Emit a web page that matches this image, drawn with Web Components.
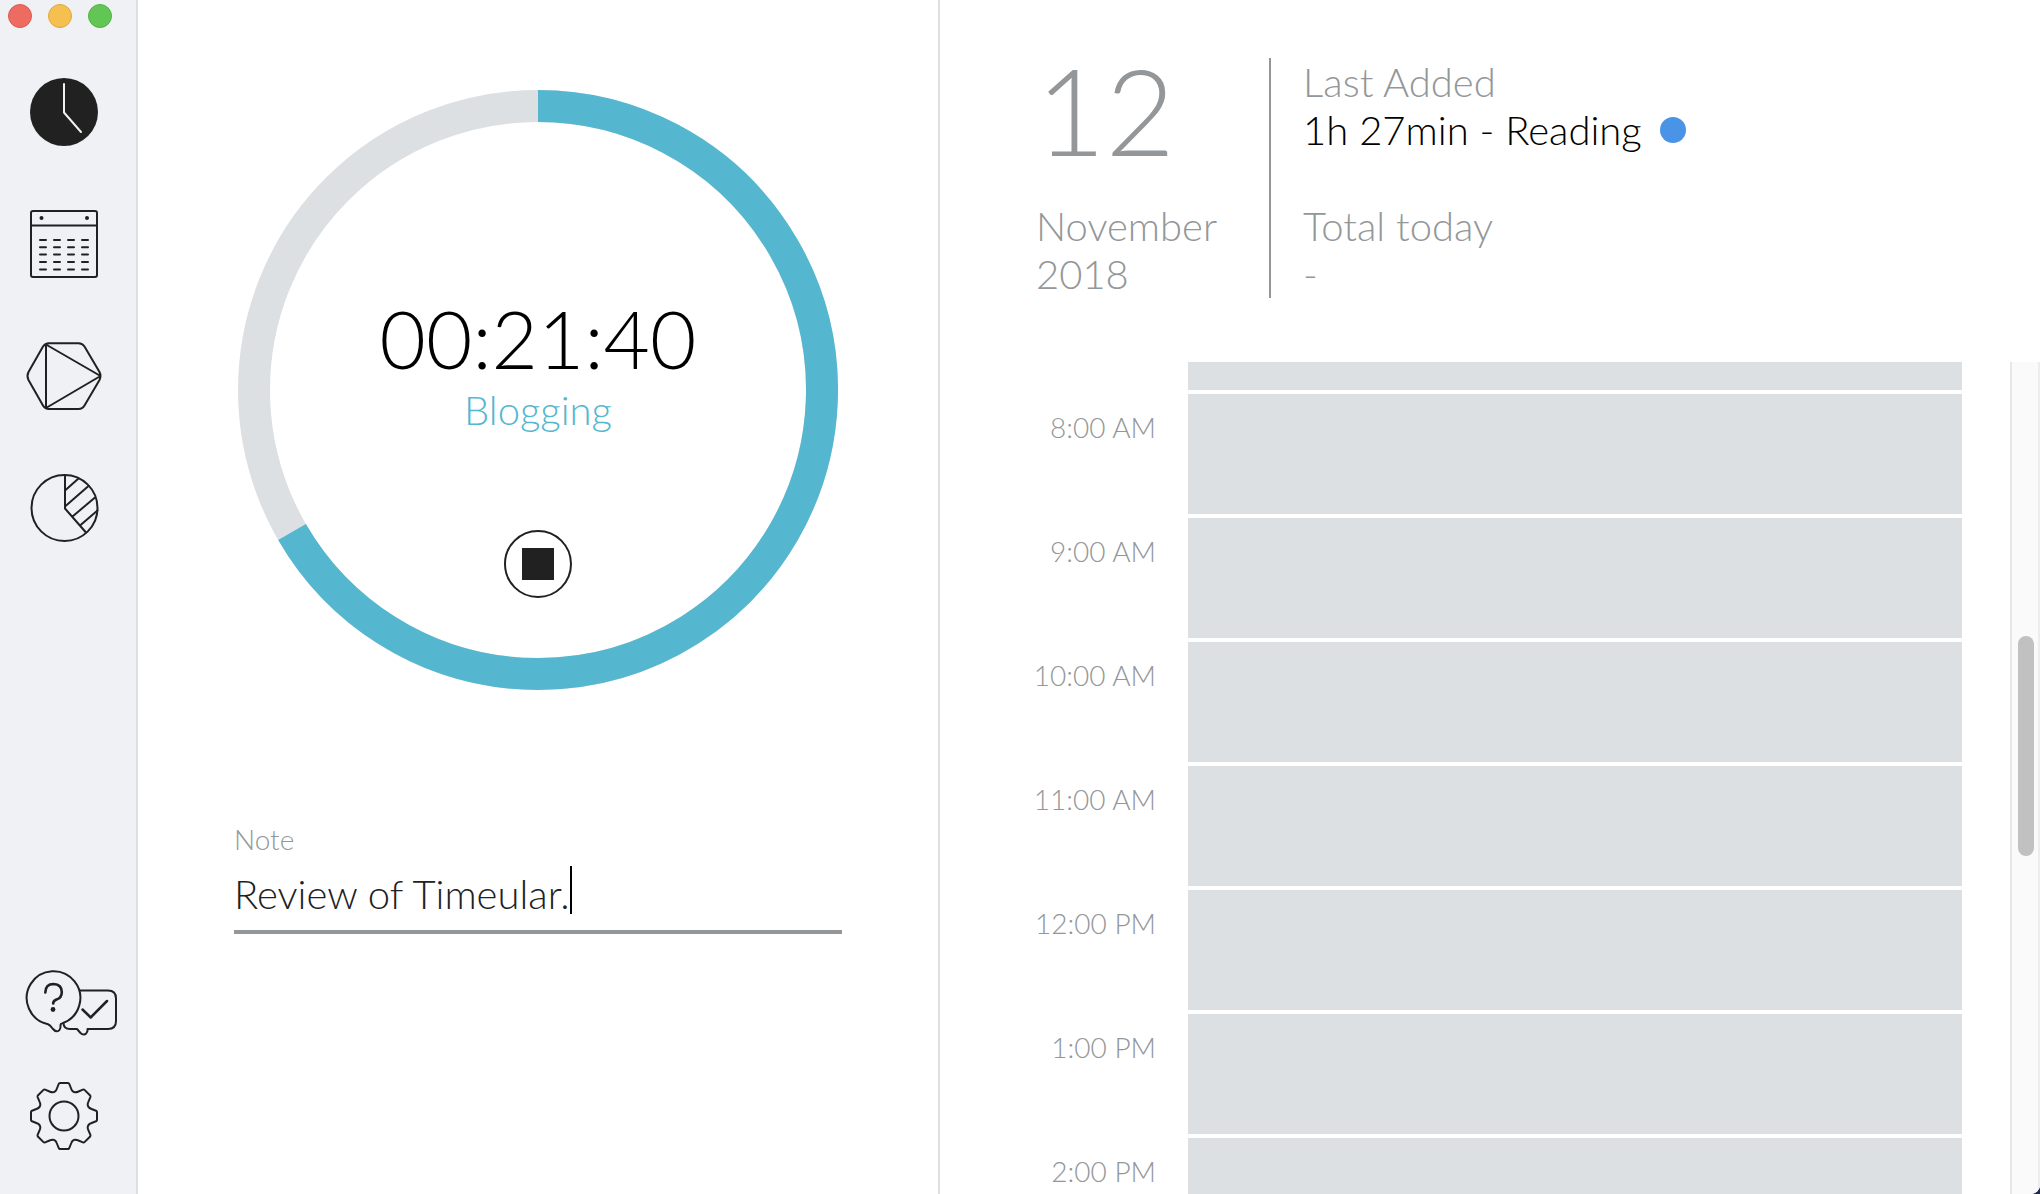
<!DOCTYPE html>
<html lang="en">
<head>
<meta charset="utf-8">
<title>Time tracker</title>
<style>
  html, body { margin: 0; height: 100%; background: #1f2a4d; }
  body { font-family: Lato, "Open Sans", sans-serif; font-weight: 300; color: #000; }
</style>
</head>
<body>
<time-app></time-app>

<template id="t-app">
  <style>
    :host { display: grid; grid-template-columns: auto minmax(0, 401fr) minmax(0, 550fr); height: 100vh; overflow: hidden; background: #fff; border-radius: 0 0 9px 0;
      --ink: #212121; --muted: #939799; --block: #dce0e3; --accent: #55b7cf; }
    .main { padding: 90px 96px 0; border-right: 2px solid #dddfe1; display: flex; flex-direction: column; }
    tracker-dial { align-self: center; margin-bottom: 132px; }
    .day { min-height: 0; display: flex; flex-direction: column; }
    day-summary { padding: 58px 96px 64px; }
    day-timeline { flex: 1; min-height: 0; }
  </style>
  <side-nav></side-nav>
  <main class="main">
    <tracker-dial time="00:21:40" activity="Blogging" angle="240"></tracker-dial>
    <note-field label="Note" value="Review of Timeular."></note-field>
  </main>
  <section class="day">
    <day-summary>
      <span slot="day">12</span>
      <span slot="month">November<br>2018</span>
      <span slot="last">1h 27min - Reading</span>
      <span slot="total">-</span>
    </day-summary>
    <day-timeline></day-timeline>
  </section>
</template>

<template id="t-nav">
  <style>
    :host { display: flex; flex-direction: column; width: 136px; background: #f0f1f5; border-right: 2px solid #dddfe4; }
    .lights { display: flex; gap: 16px; padding: 4px 8px 50px; }
    .lights button { width: 24px; height: 24px; border-radius: 50%; border: 1px solid; padding: 0; }
    .r { background: #ed6b60; border-color: #dc5a50 !important; }
    .y { background: #f5c04f; border-color: #dfa83f !important; }
    .g { background: #62c655; border-color: #54b247 !important; }
    nav { flex: 1; display: flex; flex-direction: column; gap: 60px; padding: 0 24px 40px; }
    nav a { display: block; width: 100px; height: 72px; }
    nav a:nth-of-type(5) { margin-top: auto; margin-bottom: -18px; }
    svg { display: block; overflow: visible; fill: none; stroke: #212121; stroke-width: 2; stroke-linejoin: round; stroke-linecap: round; }
  </style>
  <div class="lights">
    <button class="r" aria-label="Close"></button><button class="y" aria-label="Minimise"></button><button class="g" aria-label="Zoom"></button>
  </div>
  <nav>
    <a href="#track" aria-label="Track"><svg width="100" height="72"><circle cx="40" cy="34" r="34" fill="#212121" stroke="none"/><path d="M40 6V34.500L57 54" stroke="#f0f1f5"/></svg></a>
    <a href="#calendar" aria-label="Calendar"><svg width="100" height="72"><rect x="7" y="1" width="66" height="66" rx="2"/><path d="M7 15.500H73"/><g fill="#212121" stroke="none"><circle cx="17.500" cy="8" r="2"/><circle cx="63" cy="8" r="2"/></g><path d="M16 30h6M30 30h6M44 30h6M58 30h6M16 37.300h6M30 37.300h6M44 37.300h6M58 37.300h6M16 44.600h6M30 44.600h6M44 44.600h6M58 44.600h6M16 52h6M30 52h6M44 52h6M58 52h6M16 59.500h6M30 59.500h6M44 59.500h6M58 59.500h6"/></svg></a>
    <a href="#device" aria-label="Device"><svg width="100" height="72"><path d="M25 1.300H54.500Q58.500 1.500 60.500 4.500L75.500 30Q77.500 34 75.500 38L60.500 63.500Q58.500 67 54.500 67H25Q21 67 19 63.500L4.500 38Q2.500 34 4.500 30L19 4.500Q21 1.500 25 1.300ZM22 2.500V66L76.500 34Z"/></svg></a>
    <a href="#reports" aria-label="Reports"><svg width="100" height="72"><circle cx="40.500" cy="34" r="33"/><path d="M41 1V34.500L62 58.500M41 16.500L54.500 4.500M41 32.500L64.500 12M48.500 42.500L71 23.500M56 51.500L73.500 36.500"/></svg></a>
    <a href="#help" aria-label="Help and feedback"><svg width="100" height="72"><path d="M56 22.500H84Q92 22.500 92 30.500V53Q92 61 84 61H63.500V63Q62 67 59.500 66.500Q58 66.500 56.500 65L53 61H46Q39.500 61 39.500 55"/><path d="M58.500 41.500L66.700 49.500L83 33" stroke-width="2.500"/><path d="M24 56.200A26.800 26.800 0 1 1 38 55.400Q36.500 55.500 36.500 57V59Q36 63 33 63.300Q31 63.500 28.500 60.500Q26 57 24 56.200Z" fill="#f0f1f5"/><path d="M21.300 24.500Q21.500 16 29.500 16Q37.800 16.500 37.800 24Q37.800 30 32.500 31.500Q29 33 29.200 35.500" stroke-width="2.600"/><circle cx="29" cy="41.500" r="2.400" fill="#212121" stroke="none"/></svg></a>
    <a href="#settings" aria-label="Settings"><svg width="100" height="72"><g transform="translate(40 34)"><circle r="14.500"/><path id="gear"/></g></svg></a>
  </nav>
</template>

<template id="t-dial">
  <style>
    :host { display: grid; width: 600px; height: 600px; }
    svg, .face { grid-area: 1 / 1; }
    svg { width: 100%; height: 100%; display: block; fill: none; stroke-width: 32; }
    .track { stroke: var(--block); }
    .arc { stroke: var(--accent); }
    .face { display: flex; flex-direction: column; align-items: center; padding-top: 200px; }
    .time { font-size: 80px; line-height: 96px; }
    .act { font-size: 40px; line-height: 48px; color: var(--accent); }
    button { margin-top: 96px; width: 68px; height: 68px; border-radius: 50%; border: 2px solid var(--ink); background: none; padding: 0; display: grid; place-items: center; }
    button::before { content: ""; width: 32px; height: 32px; background: var(--ink); }
  </style>
  <svg viewBox="0 0 600 600" aria-hidden="true"><circle class="track" cx="300" cy="300" r="284"/><path class="arc"/></svg>
  <div class="face"><div class="time"></div><div class="act"></div><button aria-label="Stop"></button></div>
</template>

<template id="t-note">
  <style>
    :host { display: flex; flex-direction: column; }
    label { font-size: 28px; line-height: 34px; color: var(--muted); }
    .box { display: grid; border-bottom: 4px solid var(--muted); padding: 10px 0 12px; }
    input { box-sizing: border-box; font: inherit; font-size: 40px; line-height: 48px; height: 52px; width: 100%; border: 0; padding: 4px 0 0; outline: 0; background: none; color: var(--ink); caret-color: #000; }
    input, .caret { grid-area: 1 / 1; }
    .caret { font-size: 40px; line-height: 48px; height: 48px; justify-self: start; border-right: 2px solid #000; pointer-events: none; }
    .caret::before { content: attr(data-text); visibility: hidden; }
  </style>
  <label for="note"></label>
  <div class="box"><input id="note" type="text"><span class="caret" aria-hidden="true"></span></div>
</template>

<template id="t-summary">
  <style>
    :host { display: flex; color: var(--muted); font-size: 40px; line-height: 48px; }
    .date { padding-right: 52px; border-right: 2px solid var(--muted); display: flex; flex-direction: column; gap: 40px; }
    .num { font-size: 120px; line-height: 104px; }
    .info { padding-left: 32px; display: flex; flex-direction: column; gap: 48px; }
    .last { display: flex; align-items: center; gap: 18px; color: #000; }
    .last i { width: 26px; height: 26px; border-radius: 50%; background: #4a94e8; }
  </style>
  <div class="date"><div class="num"><slot name="day"></slot></div><div><slot name="month"></slot></div></div>
  <div class="info">
    <div><div>Last Added</div><div class="last"><slot name="last"></slot><i></i></div></div>
    <div><div>Total today</div><div><slot name="total"></slot></div></div>
  </div>
</template>

<template id="t-line">
  <style>
    :host { display: flex; overflow: hidden; }
    .rows { flex: 1; padding-left: 72px; padding-right: 48px; display: flex; flex-direction: column; gap: 4px; overflow: hidden; }
    .row { flex: none; height: 120px; display: flex; }
    .row:first-child { height: 28px; }
    .label { width: 144px; padding: 16px 32px 0 0; text-align: right; font-size: 28px; line-height: 34px; color: var(--muted); }
    .slot { flex: 1; background: var(--block); }
    .bar { width: 24px; border-left: 2px solid #e7e7e7; border-right: 2px solid #ededed; background: #fafafa; display: flex; flex-direction: column; align-items: flex-end; padding-right: 2px; }
    .bar::before { content: ""; flex: 274 0 0; }
    .bar i { flex: 220 0 0; width: 16px; border-radius: 8px; background: #c1c1c1; margin-right: 2px; }
    .bar::after { content: ""; flex: 338 0 0; }
  </style>
  <div class="rows"></div>
  <div class="bar" aria-hidden="true"><i></i></div>
</template>

<script>
  class Base extends HTMLElement {
    constructor(id) {
      super();
      this.attachShadow({ mode: "open" }).append(document.getElementById(id).content.cloneNode(true));
    }
    $(s) { return this.shadowRoot.querySelector(s); }
  }
  customElements.define("side-nav", class extends Base {
    constructor() {
      super("t-nav");
      // One gear tooth, repeated every 45 degrees
      const tooth = [["L", -9, -24.5], ["Q", -7.8, -25.5, -7.3, -27], ["L", -5.3, -32], ["Q", -4.8, -33, -4, -33], ["L", 4, -33], ["Q", 4.8, -33, 5.3, -32], ["L", 7.3, -27], ["Q", 7.8, -25.5, 9, -24.5]];
      let d = "";
      for (let k = 0; k < 8; k++) {
        const a = k * Math.PI / 4, c = Math.cos(a), s = Math.sin(a);
        for (const [op, ...p] of tooth) {
          d += (d ? op : "M");
          for (let i = 0; i < p.length; i += 2) d += (p[i] * c - p[i + 1] * s).toFixed(2) + " " + (p[i] * s + p[i + 1] * c).toFixed(2) + " ";
        }
      }
      this.$("#gear").setAttribute("d", d + "Z");
    }
  });
  customElements.define("tracker-dial", class extends Base {
    constructor() { super("t-dial"); }
    connectedCallback() {
      this.$(".time").textContent = this.getAttribute("time");
      this.$(".act").textContent = this.getAttribute("activity");
      const deg = +this.getAttribute("angle"), a = deg * Math.PI / 180;
      this.$(".arc").setAttribute("d", `M300 16A284 284 0 ${deg > 180 ? 1 : 0} 1 ${300 + 284 * Math.sin(a)} ${300 - 284 * Math.cos(a)}`);
    }
  });
  customElements.define("note-field", class extends Base {
    constructor() { super("t-note"); }
    connectedCallback() {
      this.$("label").textContent = this.getAttribute("label");
      const input = this.$("input"), caret = this.$(".caret");
      input.value = caret.dataset.text = this.getAttribute("value");
      input.addEventListener("input", () => { caret.dataset.text = input.value; });
    }
  });
  customElements.define("day-summary", class extends Base { constructor() { super("t-summary"); } });
  customElements.define("day-timeline", class extends Base {
    constructor() {
      super("t-line");
      const hours = ["", "8:00 AM", "9:00 AM", "10:00 AM", "11:00 AM", "12:00 PM", "1:00 PM", "2:00 PM"];
      this.$(".rows").innerHTML = hours.map(h => `<div class="row"><div class="label">${h}</div><div class="slot"></div></div>`).join("");
    }
  });
  customElements.define("time-app", class extends Base { constructor() { super("t-app"); } });
</script>
</body>
</html>
